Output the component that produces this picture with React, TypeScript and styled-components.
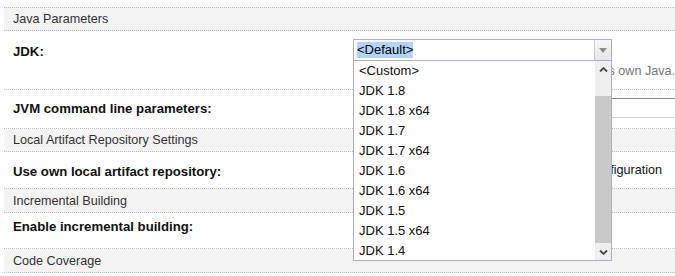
import styled, { createGlobalStyle } from "styled-components";

const jdks = [
    "<Custom>",
    "JDK 1.8",
    "JDK 1.8 x64",
    "JDK 1.7",
    "JDK 1.7 x64",
    "JDK 1.6",
    "JDK 1.6 x64",
    "JDK 1.5",
    "JDK 1.5 x64",
    "JDK 1.4",
]

const GlobalStyle = createGlobalStyle`
  body {
    margin: 0;
    background: #fff;
    font-family: "Liberation Sans", Arial, sans-serif;
    overflow: hidden;
  }
`

const Chevron = ({down}: {down?: boolean}) => (
    <svg width="9" height="6" viewBox="0 0 9 6">
        <path
            d={down ? "M1 1.5 L4.5 5 L8 1.5" : "M1 4.5 L4.5 1 L8 4.5"}
            fill="none"
            stroke="#4a4a4a"
            strokeWidth="1.8"
        />
    </svg>
)

export default function App() {
    return (
        <>
            <GlobalStyle/>
            <Page>
                <Header $h={22} $first>Java Parameters</Header>
                <Row $h={58}>
                    <Label $pt={13}>JDK:</Label>
                    <Value $pt={8}>
                        <SelectWrap>
                            <Select>
                                <Selected>&lt;Default&gt;</Selected>
                                <ArrowButton>
                                    <Triangle/>
                                </ArrowButton>
                            </Select>
                            <List>
                                <Items>
                                    {jdks.map(j => <Item key={j}>{j}</Item>)}
                                </Items>
                                <Scrollbar>
                                    <ScrollArrow $h={18}><Chevron/></ScrollArrow>
                                    <Thumb/>
                                    <ScrollArrow $h={17}><Chevron down/></ScrollArrow>
                                </Scrollbar>
                            </List>
                        </SelectWrap>
                        <Hint>Leave default to use the agent's own Java.</Hint>
                    </Value>
                </Row>
                <Row $h={38}>
                    <Label $pt={11}>JVM command line parameters:</Label>
                    <Value $pt={8}>
                        <TextInput/>
                    </Value>
                </Row>
                <Header $h={22}>Local Artifact Repository Settings</Header>
                <Row $h={36}>
                    <Label $pt={12}>Use own local artifact repository:</Label>
                    <Value $pt={11}>
                        <Plain>Use agent Maven configuration</Plain>
                    </Value>
                </Row>
                <Header $h={23}>Incremental Building</Header>
                <Row $h={35}>
                    <Label $pt={6}>Enable incremental building:</Label>
                    <Value $pt={6}/>
                </Row>
                <Header $h={23}>Code Coverage</Header>
            </Page>
        </>
    );
}

const Page = styled.div`
  padding: 7px 0 0 4px;
  width: 671px;
  overflow: hidden;
`

const Header = styled.div<{$h: number, $first?: boolean}>`
  height: ${p => p.$h}px;
  display: flex;
  align-items: center;
  padding-left: 9px;
  background: #f3f3f3;
  border-top: ${p => p.$first ? "1px dotted #bdbdbd" : "none"};
  border-bottom: 1px dotted #bdbdbd;
  font-size: 12.6px;
  color: #333;
`

const Row = styled.div<{$h: number}>`
  height: ${p => p.$h}px;
  display: grid;
  grid-template-columns: 349px 1fr;
  border-bottom: 1px dotted #bdbdbd;
`

const Label = styled.div<{$pt: number}>`
  padding: ${p => p.$pt}px 0 0 9px;
  font-size: 13.2px;
  line-height: 16px;
  font-weight: bold;
  color: #111;
`

const Value = styled.div<{$pt: number}>`
  padding-top: ${p => p.$pt}px;
  min-width: 0;
`

const SelectWrap = styled.div`
  position: relative;
  width: 259px;
  z-index: 2;
`

const Select = styled.div`
  height: 20px;
  display: flex;
  align-items: center;
  border: 1px solid #aeb0c6;
  background: #fff;
`

const Selected = styled.span`
  margin-left: 3px;
  line-height: 16px;
  font-size: 13px;
  background: #b3d3fb;
  color: #000;
`

const ArrowButton = styled.div`
  margin-left: auto;
  width: 16px;
  height: 20px;
  border-left: 1px solid #ccccd6;
  background: linear-gradient(#f6f6f6, #e6e6e6);
  display: flex;
  align-items: center;
  justify-content: center;
`

const Triangle = styled.div`
  width: 0;
  height: 0;
  border-left: 4px solid transparent;
  border-right: 4px solid transparent;
  border-top: 5px solid #8c8c8c;
`

const List = styled.div`
  position: absolute;
  top: 100%;
  left: 0;
  width: 257px;
  height: 199px;
  display: flex;
  background: #fff;
  border: 1px solid #aeb0c6;
  border-top: none;
  overflow: hidden;
`

const Items = styled.div`
  flex: 1;
`

const Item = styled.div`
  height: 20px;
  line-height: 20px;
  padding-left: 5px;
  font-size: 13px;
  color: #111;
  white-space: nowrap;
`

const Scrollbar = styled.div`
  width: 16px;
  display: flex;
  flex-direction: column;
  background: #efefef;
`

const ScrollArrow = styled.div<{$h: number}>`
  height: ${p => p.$h}px;
  display: flex;
  align-items: center;
  justify-content: center;
`

const Thumb = styled.div`
  margin-top: 17px;
  flex: 1;
  background: #c9c9c9;
`

const Hint = styled.div`
  margin-top: 3px;
  padding-right: 0;
  text-align: right;
  font-size: 12.6px;
  line-height: 15px;
  color: #777;
  white-space: nowrap;
`

const TextInput = styled.input`
  box-sizing: border-box;
  width: 340px;
  height: 20px;
  border: 1px solid #cfcfcf;
  border-top-color: #8a8a8a;
  padding: 0 3px;
`

const Plain = styled.div`
  padding-right: 13px;
  text-align: right;
  font-size: 12.6px;
  line-height: 15px;
  color: #111;
  white-space: nowrap;
`
